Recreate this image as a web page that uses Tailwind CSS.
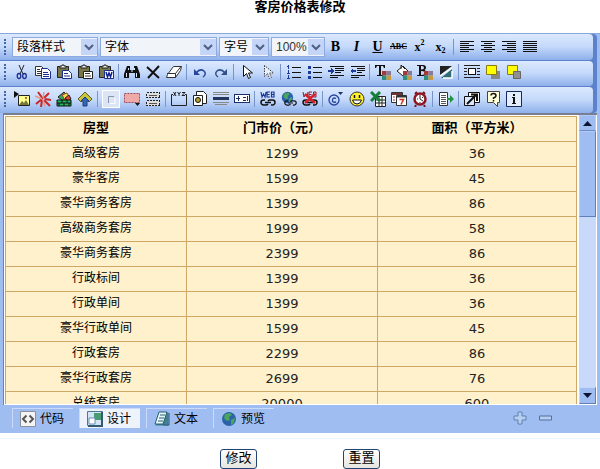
<!DOCTYPE html>
<html lang="zh-CN">
<head>
<meta charset="utf-8">
<title>客房价格表修改</title>
<script src="https://cdn.jsdelivr.net/npm/@tailwindcss/browser@4"></script>
</head>
<body class="bg-white text-black text-[12px] leading-4 overflow-hidden font-['Liberation_Sans','Noto_Sans_CJK_SC',sans-serif]">

<svg class="hidden" aria-hidden="true">
  <symbol id="chain" viewBox="0 0 16 8"><path d="M5 1.500H3.500a2.500 2.500 0 0 0 0 5H6a2.500 2.500 0 0 0 2-1M11 6.500h1.500a2.500 2.500 0 0 0 0-5H10a2.500 2.500 0 0 0-2 1M5 4h6" fill="none" stroke="#111" stroke-width="1.500"/></symbol>
  <symbol id="clip" viewBox="0 0 16 16"><path d="M1.500 2.500h11v11h-11z" fill="#77774a" stroke="#222"/><path d="M4 4V2h2V1h2v1h2v2z" fill="#eee" stroke="#222"/></symbol>
  <symbol id="swatch" viewBox="0 0 8 8"><path d="M0 0h4v4H0z" fill="#a33a35"/><path d="M4 0h4v4H4z" fill="#8a7a9a"/><path d="M0 4h4v4H0z" fill="#2f8f7f"/><path d="M4 4h4v4H4z" fill="#c89a40"/></symbol>
  <symbol id="globe" viewBox="0 0 16 16"><circle cx="8" cy="8" r="7" fill="#2b62a8"/><path d="M4 3l5-1 2 2-3 2 1 3-3 1-3-3zM10 9l4-2-1 5-3 2z" fill="#49a65c"/></symbol>
</svg>

<h1 class="h-[33px] text-center text-[13px] leading-[14px] font-bold">客房价格表修改</h1>

<main class="border-t border-[#88a8dc] bg-[#a0bdf2]">
  <div class="mr-[3px] rounded-r bg-[#5d82cc] [&_svg]:size-4 [&_button]:flex [&_button]:h-5 [&_button]:w-[21px] [&_button]:items-center [&_button]:justify-center" role="group" aria-label="编辑工具">

    <!-- 样式与字体 -->
    <div class="mr-1 flex h-[26px] items-center rounded-r bg-linear-to-b from-[#dce9fe] via-[#c3d8fa] to-[#8fb0eb]" role="toolbar" aria-label="格式">
      <span class="ml-1 mr-[6px] h-4 border-l-2 border-dotted border-[#4665a5]"></span>
      <div class="flex h-5 items-center gap-[2px] [&>label]:relative [&>label]:block [&>label]:h-5 [&>label]:border [&>label]:border-[#8caade] [&>label]:bg-[#f1f4f8] [&_select]:h-full [&_select]:w-full [&_select]:appearance-none [&_select]:pl-1 [&_svg]:pointer-events-none [&_svg]:absolute [&_svg]:right-0 [&_svg]:top-[1px] [&_svg]:bg-[#c4d5f8]">
        <label class="w-[86px]"><select aria-label="段落样式"><option>段落样式</option></select><svg viewBox="0 0 16 16"><path d="M4 6l4 4 4-4" fill="none" stroke="#4d6185" stroke-width="2"/></svg></label>
        <label class="w-[117px]"><select aria-label="字体"><option>字体</option></select><svg viewBox="0 0 16 16"><path d="M4 6l4 4 4-4" fill="none" stroke="#4d6185" stroke-width="2"/></svg></label>
        <label class="w-[50px]"><select aria-label="字号"><option>字号</option></select><svg viewBox="0 0 16 16"><path d="M4 6l4 4 4-4" fill="none" stroke="#4d6185" stroke-width="2"/></svg></label>
        <label class="w-[54px] text-[#333]"><select aria-label="缩放"><option>100%</option></select><svg viewBox="0 0 16 16"><path d="M4 6l4 4 4-4" fill="none" stroke="#4d6185" stroke-width="2"/></svg></label>
      </div>
      <div class="flex font-['Liberation_Serif',serif] text-[14px] font-bold">
        <button aria-label="加粗">B</button>
        <button aria-label="斜体" class="italic">I</button>
        <button aria-label="下划线" class="underline">U</button>
        <button aria-label="删除线" class="text-[8px] line-through">ABC</button>
        <button aria-label="上标" class="text-[12px]">x<span class="self-start text-[8px] leading-3">2</span></button>
        <button aria-label="下标" class="text-[12px]">x<span class="self-end text-[8px] leading-3">2</span></button>
      </div>
      <span class="mx-[2px] h-4 border-l border-[#7795c8]"></span>
      <div class="flex">
        <button aria-label="左对齐"><svg viewBox="0 0 16 16" shape-rendering="crispEdges"><path d="M1 2.500h14M1 4.500h9M1 6.500h14M1 8.500h9M1 10.500h14M1 12.500h9" stroke="#111"/></svg></button>
        <button aria-label="居中"><svg viewBox="0 0 16 16" shape-rendering="crispEdges"><path d="M1 2.500h14M4 4.500h8M1 6.500h14M4 8.500h8M1 10.500h14M4 12.500h8" stroke="#111"/></svg></button>
        <button aria-label="右对齐"><svg viewBox="0 0 16 16" shape-rendering="crispEdges"><path d="M1 2.500h14M6 4.500h9M1 6.500h14M6 8.500h9M1 10.500h14M6 12.500h9" stroke="#111"/></svg></button>
        <button aria-label="两端对齐"><svg viewBox="0 0 16 16" shape-rendering="crispEdges"><path d="M1 2.500h14M1 4.500h14M1 6.500h14M1 8.500h14M1 10.500h14M1 12.500h14" stroke="#111"/></svg></button>
      </div>
    </div>

    <!-- 剪贴板与编辑 -->
    <div class="mr-1 mt-px flex h-[25px] items-center rounded-r bg-linear-to-b from-[#dce9fe] via-[#c3d8fa] to-[#8fb0eb] pb-[3px]" role="toolbar" aria-label="编辑">
      <span class="ml-1 mr-[5px] h-4 border-l-2 border-dotted border-[#4665a5]"></span>
      <button aria-label="剪切"><svg viewBox="0 0 16 16"><path d="M5 1l4 9M10 1L6 10" fill="none" stroke="#222"/><ellipse cx="5" cy="12" rx="1.800" ry="2.500" fill="none" stroke="#1c2f8c" stroke-width="1.300"/><ellipse cx="10.500" cy="12" rx="1.800" ry="2.500" fill="none" stroke="#1c2f8c" stroke-width="1.300"/></svg></button>
      <button aria-label="复制"><svg viewBox="0 0 16 16"><path d="M.5 2.500h6l2 2v7h-8z" fill="#fff" stroke="#333"/><path d="M2 5.500h3M2 7.500h4M2 9.500h4" stroke="#333"/><path d="M6.500 4.500h6l3 3v7h-9z" fill="#fff" stroke="#1c2f8c"/><path d="M8 8.500h5M8 10.500h6M8 12.500h6" stroke="#1c2f8c"/></svg></button>
      <button aria-label="粘贴"><svg viewBox="0 0 16 16"><use href="#clip"/><path d="M6.500 6.500h6l3 3v5h-9z" fill="#fff" stroke="#1c2f8c"/><path d="M8 9.500h4M8 12h6" stroke="#1c2f8c"/></svg></button>
      <button aria-label="粘贴纯文本"><svg viewBox="0 0 16 16"><use href="#clip"/><path d="M6.500 7.500h9v7h-9z" fill="#fff" stroke="#222"/><path d="M8 9.500h5M8 12h6" stroke="#333"/></svg></button>
      <button aria-label="从Word粘贴"><svg viewBox="0 0 16 16"><use href="#clip"/><path d="M6.500 6.500h9v8h-9z" fill="#fff" stroke="#1c2f8c"/><path d="M8 8l1.500 5L11 9l1.500 4L14 8" fill="none" stroke="#10208c" stroke-width="1.500"/></svg></button>
      <span class="mx-[2px] h-4 border-l border-[#7795c8]"></span>
      <button aria-label="查找"><svg viewBox="0 0 16 16"><path d="M3 2h3v4h4V2h3l3 8v4h-5V9H5v5H0v-4z" fill="#111"/><path d="M2.500 9v4M12.500 9v4M4.500 4v2M10.500 4v2M7 7h2" stroke="#dce7fa"/></svg></button>
      <button aria-label="删除"><svg viewBox="0 0 16 16"><path d="M2 3l12 11M14 2L3 14" stroke="#111" stroke-width="2"/></svg></button>
      <button aria-label="清除格式"><svg viewBox="0 0 16 16"><path d="M7.500 2.500h8l-1 4-5 7h-9l1-3z" fill="#fff" stroke="#333"/><path d="M1 9.500h8.500l5.500-7M9.500 9.500v4" fill="none" stroke="#333"/></svg></button>
      <span class="mx-[2px] h-4 border-l border-[#7795c8]"></span>
      <button aria-label="撤销"><svg viewBox="0 0 16 16"><path d="M4 9q4-5 8-2 3 3-1 6" fill="none" stroke="#26459c" stroke-width="1.500"/><path d="M2 5v6h6z" fill="#26459c"/></svg></button>
      <button aria-label="重做"><svg viewBox="0 0 16 16"><path d="M12 9Q8 4 4 7q-3 3 1 6" fill="none" stroke="#33508a" stroke-width="1.500"/><path d="M14 5v6H8z" fill="#33508a"/></svg></button>
      <span class="mx-[2px] h-4 border-l border-[#7795c8]"></span>
      <button aria-label="选择"><svg viewBox="0 0 16 16"><path d="M4.500 1.500v11l3-3 2 5 2-1-2-4.500h4z" fill="#fff" stroke="#111"/></svg></button>
      <button aria-label="取消选择"><svg viewBox="0 0 16 16"><path d="M4.500 1.500v11l3-3 2 5 2-1-2-4.500h4z" fill="#e8f0fd" stroke="#444" stroke-dasharray="1.500 1"/></svg></button>
      <span class="mx-[2px] h-4 border-l border-[#7795c8]"></span>
      <button aria-label="编号列表"><svg viewBox="0 0 16 16" shape-rendering="crispEdges"><path d="M2.500 1v4M2.500 6v4M2.500 11v4M1 2.500h2M1 9.500h3M1 14.500h3" stroke="#1d3b9a"/><path d="M6 3.500h9M6 8.500h9M6 13.500h9" stroke="#111"/></svg></button>
      <button aria-label="项目列表"><svg viewBox="0 0 16 16" shape-rendering="crispEdges"><path d="M1 2h3v3H1zM1 7h3v3H1zM1 12h3v3H1z" fill="#1d3b9a"/><path d="M6 3.500h9M6 8.500h9M6 13.500h9" stroke="#111"/></svg></button>
      <button aria-label="增加缩进"><svg viewBox="0 0 16 16" shape-rendering="crispEdges"><path d="M2 2.500h14M7 4.500h9M7 6.500h9M7 8.500h6M2 11.500h14M2 13.500h8" stroke="#111"/><path d="M0 6h3V4l3 3-3 3V8H0z" fill="#1d3b9a"/></svg></button>
      <button aria-label="减少缩进"><svg viewBox="0 0 16 16" shape-rendering="crispEdges"><path d="M2 2.500h14M8 4.500h8M8 6.500h8M8 8.500h5M2 11.500h14M2 13.500h8" stroke="#111"/><path d="M7 6H4V4L1 7l3 3V8h3z" fill="#1d3b9a"/></svg></button>
      <span class="mx-[2px] h-4 border-l border-[#7795c8]"></span>
      <button aria-label="文字颜色"><svg viewBox="0 0 16 16"><path d="M0 1h10v3H9L8 2H6v9h2v1H2v-1h2V2H2L1 4H0z" fill="#111"/><use href="#swatch" x="7" y="7" width="9" height="9"/></svg></button>
      <button aria-label="填充颜色"><svg viewBox="0 0 16 16"><path d="M7 2l5 5-5 5-6-5z" fill="#fff" stroke="#222"/><path d="M5 5V1l4 4" fill="none" stroke="#222"/><use href="#swatch" x="7" y="7" width="9" height="9"/></svg></button>
      <button aria-label="文字背景色"><svg viewBox="0 0 16 16"><path fill-rule="evenodd" d="M0 1h6q3 0 3 2.700Q9 5.300 7.500 6 10 7 10 9q0 3-4 3H0v-1h2V2H0zM4 2v3.500h1q2 0 2-1.700Q7 2 5 2zM4 7v4h1q2.500 0 2.500-2T5 7z" fill="#111"/><use href="#swatch" x="7" y="7" width="9" height="9"/></svg></button>
      <button aria-label="背景色"><svg viewBox="0 0 16 16"><path d="M2 2h12L2 11z" fill="#222"/><path d="M14 5v9H3z" fill="#316b75"/><path d="M2 12L14 4M5 14h9V7" fill="none" stroke="#fff" stroke-width="1.500"/></svg></button>
      <span class="mx-[2px] h-4 border-l border-[#7795c8]"></span>
      <button aria-label="文字环绕"><svg viewBox="0 0 16 16" shape-rendering="crispEdges"><path d="M0 1.500h16M0 4.500h3M13 4.500h3M0 7.500h3M13 7.500h3M0 10.500h3M13 10.500h3M0 13.500h16" stroke="#222"/><path d="M4.500 4.500h7v6h-7z" fill="#fff" stroke="#111"/></svg></button>
      <button aria-label="上移一层"><svg viewBox="0 0 16 16"><path d="M8 7h7v8H6v-4z" fill="#888"/><path d="M1.500 1.500h10v9h-10z" fill="#ff0" stroke="#8a7a10"/></svg></button>
      <button aria-label="下移一层"><svg viewBox="0 0 16 16"><path d="M1.500 1.500h10v9h-10z" fill="#ff0" stroke="#8a7a10"/><path d="M7.500 7.500h7v7h-7z" fill="#909090" stroke="#666"/></svg></button>
    </div>

    <!-- 插入对象 -->
    <div class="mr-1 mt-px flex h-[26px] items-center rounded-r bg-linear-to-b from-[#dce9fe] via-[#c3d8fa] to-[#8fb0eb] pb-[3px]" role="toolbar" aria-label="插入">
      <span class="ml-1 mr-[5px] h-4 border-l-2 border-dotted border-[#4665a5]"></span>
      <button aria-label="插入图片"><svg viewBox="0 0 16 16"><path d="M4.500 4.500h11v10h-11z" fill="#ffff8c" stroke="#222"/><path d="M5 14l3-4 2 2 2-3 3 5z" fill="#77753a"/><circle cx="12" cy="7" r="1" fill="#a33"/><path d="M0 0l5 3-5 4z" fill="#111"/></svg></button>
      <button aria-label="插入Flash"><svg viewBox="0 0 16 16"><path d="M8 8L3 1M9 7l5-5M10 8l6 1M9 9l6 6M7 9l-1 7M7 8l-6 5" stroke="#c9272a" stroke-width="2"/><path d="M0 5l7 3M8 7l1-6M8 9l2 6" fill="none" stroke="#ec927c" stroke-width="1.500"/></svg></button>
      <button aria-label="插入媒体"><svg viewBox="0 0 16 16"><path d="M2 6l6-5 3 3-4 6z" fill="#35a858" stroke="#222"/><path d="M6 4l5-2 2 4-4 3z" fill="#f4e24c" stroke="#a33"/><path d="M9 7l4-3 2 4-3 2z" fill="#e04a36" stroke="#222"/><path d="M1 9h14v6H1z" fill="#25b45c" stroke="#111"/><path d="M6 9v3M11 9v3M3 12v3M8 12v3M13 12v3M1 12h14" stroke="#111"/></svg></button>
      <button aria-label="插入附件"><svg viewBox="0 0 16 16"><path d="M8 1l7 7-3 3-4-4-4 4-3-3z" fill="#c8c53c" stroke="#5d6020"/><path d="M8 6l4 4h-2v5H6v-5H4z" fill="#3569b8" stroke="#1d3b7a"/></svg></button>
      <span class="mx-[2px] h-4 border-l border-[#7795c8]"></span>
      <button aria-label="显示边框"><span class="border border-white bg-[#dbe5f6]"><svg viewBox="0 0 16 16"><path d="M5.500 12V5.500H11" fill="none" stroke="#8994a8"/><path d="M7 12.500h5V7" fill="none" stroke="#fff"/></svg></span></button>
      <button aria-label="表格菜单"><svg viewBox="0 0 16 16"><path d="M.5 2.500h15v9H.5z" fill="#efaaa8" stroke="#9c4a55" stroke-dasharray="2 1"/><path d="M11 12h5l-2.500 3z" fill="#111"/></svg></button>
      <button aria-label="插入分页"><svg viewBox="0 0 16 16" shape-rendering="crispEdges"><path d="M1.500 1.500h13v5h-13zM1.500 9.500h13v5h-13z" fill="#ddd" stroke="#222" stroke-dasharray="2 1"/><path d="M4 4h8M4 12h8" stroke="#555"/></svg></button>
      <span class="mx-[2px] h-4 border-l border-[#7795c8]"></span>
      <button aria-label="字段集"><svg viewBox="0 0 16 16"><path d="M2 3.500H.5v11h15v-11H14" fill="none" stroke="#222"/><path d="M2.500 1l2.500 4M5 1L2.500 5M6.500 1L8 3l1.500-2M8 3v2M11 1.500h3l-3 3h3" fill="none" stroke="#222"/></svg></button>
      <button aria-label="插入网页"><svg viewBox="0 0 16 16"><path d="M4.500.5h7l3 3v9h-10z" fill="#fff" stroke="#222"/><path d="M1.500 4.500h9v10h-9z" fill="#fff" stroke="#222"/><circle cx="6" cy="9" r="2.500" fill="#b7a52b" stroke="#111"/></svg></button>
      <button aria-label="水平线"><svg viewBox="0 0 16 16" shape-rendering="crispEdges"><path d="M0 1.500h16M0 3.500h16M0 11.500h16M2 13.500h12" stroke="#888"/><path d="M0 7.500h16" stroke="#25355c" stroke-width="3"/></svg></button>
      <button aria-label="滚动字幕"><svg viewBox="0 0 16 16" shape-rendering="crispEdges"><path d="M.5 3.500h15v8H.5z" fill="#fff" stroke="#1d2f68"/><path d="M2 7.500h4M4 5v5M9 6.500h3M9 9.500h3M13.500 5v5" stroke="#1d2f68"/></svg></button>
      <span class="mx-[2px] h-4 border-l border-[#7795c8]"></span>
      <button aria-label="超链接"><svg viewBox="0 0 16 16"><path d="M1 1l1 5 1.500-3L5 6l1-5M10 1H7v5h3M7 3.500h2.500M11.500 1v5H14V3.500h-2.500V1H14v2.500" fill="none" stroke="#1c3994" stroke-width="1.200"/><use href="#chain" x="0" y="7" width="16" height="9"/></svg></button>
      <button aria-label="超链接图"><svg viewBox="0 0 16 16"><use href="#globe" x="0" y="0" width="13" height="13"/><use href="#chain" x="3" y="8" width="13" height="8"/></svg></button>
      <button aria-label="取消超链接"><svg viewBox="0 0 16 16"><path d="M1 1l1 5 1.500-3L5 6l1-5M10 1H7v5h3M7 3.500h2.500M11.500 1v5H14V3.500h-2.500V1H14v2.500" fill="none" stroke="#8c1c34"/><use href="#chain" x="0" y="7" width="16" height="9"/><path d="M3 3l10 9M13 3L3 12" stroke="#d5232b" stroke-width="2.500"/></svg></button>
      <span class="mx-[2px] h-4 border-l border-[#7795c8]"></span>
      <button aria-label="特殊字符"><svg viewBox="0 0 16 16"><circle cx="6" cy="9" r="5" fill="none" stroke="#26459c" stroke-width="1.300"/><path d="M8 7.500q-3-1.500-3.500 1.500T8 11" fill="none" stroke="#26459c" stroke-width="1.300"/><path d="M10 1h5l-2.500 3z" fill="#1d2f68"/></svg></button>
      <button aria-label="表情"><svg viewBox="0 0 16 16"><circle cx="8" cy="8" r="7" fill="#fff22d" stroke="#333"/><path d="M5.500 4v3M10.500 4v3" stroke="#111" stroke-width="1.500"/><path d="M3.500 9h9q-1 4-4.500 4T3.500 9z" fill="#fff" stroke="#111"/></svg></button>
      <button aria-label="插入Excel表格"><svg viewBox="0 0 16 16"><path d="M5.500 5.500h10v10h-10z" fill="#fff" stroke="#222"/><path d="M5 9h10M5 12h10M9 6v9M12 6v9" stroke="#222"/><path d="M1 1l9 9M10 1L1 10" stroke="#16803a" stroke-width="3"/></svg></button>
      <button aria-label="插入日期"><svg viewBox="0 0 16 16"><path d="M.5 1.500h11v10H.5z" fill="#fff" stroke="#333"/><path d="M1 3h10" stroke="#733" stroke-width="2"/><path d="M2 6h2M2 9h2" stroke="#a33"/><path d="M5.500 4.500h10v10h-10z" fill="#fff" stroke="#333"/><path d="M6 5.500h9" stroke="#333" stroke-width="2"/><path d="M8.500 8.500h4l-2.500 5" fill="none" stroke="#c32" stroke-width="1.500"/></svg></button>
      <button aria-label="插入时间"><svg viewBox="0 0 16 16"><path d="M3 3l2-2M13 3l-2-2M4 14l-1 2M12 14l1 2" stroke="#7c1420" stroke-width="2"/><circle cx="8" cy="8" r="5.500" fill="#fff" stroke="#8f1722" stroke-width="2.500"/><path d="M8 4v4l3 2M5 8h1M8 11v1M11 6l-1 1" fill="none" stroke="#222"/></svg></button>
      <span class="mx-[2px] h-4 border-l border-[#7795c8]"></span>
      <button aria-label="引用样式"><svg viewBox="0 0 16 16"><path d="M1.500 1.500h8v13h-8z" fill="#fff" stroke="#333"/><path d="M3 4.500h5M3 6.500h5M3 8.500h5M3 10.500h5M3 12.500h5" stroke="#555"/><path d="M9 7h3V4l4 4-4 4V9H9z" fill="#239342"/></svg></button>
      <span class="mx-[2px] h-4 border-l border-[#7795c8]"></span>
      <button aria-label="全屏编辑"><svg viewBox="0 0 16 16"><path d="M4.500 1.500h11v10h-11z" fill="#fff" stroke="#111"/><path d="M.5 5.500h10v9H.5z" fill="#dce8fd" stroke="#111"/><path d="M3 13l9-9M7 3.500h6V10" fill="none" stroke="#111" stroke-width="2"/></svg></button>
      <button aria-label="帮助"><svg viewBox="0 0 16 16"><path d="M2.500.5h12v11h-2v4l-4-4h-6z" fill="#ffffd8" stroke="#444"/><path d="M6 4.500Q6 2.500 8.500 2.500T11 5q0 1-2.500 2v1M8.500 9v1.500" fill="none" stroke="#111" stroke-width="1.500"/></svg></button>
      <button aria-label="关于"><svg viewBox="0 0 16 16"><path d="M.5.5h15v15H.5z" fill="#e4edfd" stroke="#17285a"/><path d="M7 3h2v2H7zM6 6h3v6h1v1H6v-1h1V7H6z" fill="#111"/></svg></button>
    </div>
  </div>

  <!-- 编辑区 -->
  <section class="ml-[3px] mr-[3px] flex h-[292px] border-l border-t-2 border-[#777f91] bg-white pb-[1px]" aria-label="编辑区">
    <div class="min-w-0 flex-1 overflow-hidden pl-[1px] pt-[1px] pr-[2px]">
      <table class="w-full table-fixed border-collapse bg-[#fff1cc] text-center [&_td]:border [&_td]:border-[#cfa766] [&_td]:p-0 [&_td:first-child]:pb-[2px] [&_th]:border [&_th]:border-[#cfa766] [&_th]:p-0 [&_th]:pb-[2px] [&_tr]:h-[25px] [&_td+td]:font-['DejaVu_Sans',sans-serif] [&_td+td]:text-[13px] [&_td+td]:text-[#222]">
        <colgroup><col class="w-[181px]"><col class="w-[191px]"><col></colgroup>
        <thead class="text-[13px]"><tr><th scope="col">房型</th><th scope="col">门市价（元）</th><th scope="col">面积（平方米）</th></tr></thead>
        <tbody>
          <tr><td>高级客房</td><td>1299</td><td>36</td></tr>
          <tr><td>豪华客房</td><td>1599</td><td>45</td></tr>
          <tr><td>豪华商务客房</td><td>1399</td><td>86</td></tr>
          <tr><td>高级商务套房</td><td>1999</td><td>58</td></tr>
          <tr><td>豪华商务套房</td><td>2399</td><td>86</td></tr>
          <tr><td>行政标间</td><td>1399</td><td>36</td></tr>
          <tr><td>行政单间</td><td>1399</td><td>36</td></tr>
          <tr><td>豪华行政单间</td><td>1599</td><td>45</td></tr>
          <tr><td>行政套房</td><td>2299</td><td>86</td></tr>
          <tr><td>豪华行政套房</td><td>2699</td><td>76</td></tr>
          <tr><td>总统套房</td><td>20000</td><td>600</td></tr>
        </tbody>
      </table>
    </div>
    <div class="mr-[1px] flex w-[17px] flex-col bg-[#c9d9fa]">
      <button aria-label="向上滚动" class="flex h-4 items-center justify-center border border-[#b5cbf7] border-b-[#6d8cc4] bg-[#a0bdf2]"><svg class="h-[5px] w-[9px]" viewBox="0 0 9 5"><path d="M0 5l4.500-5L9 5z" fill="#0c1430"/></svg></button>
      <div class="h-[86px] border border-[#b5cbf7] border-b-[#5f7fb8] border-r-[#5f7fb8] bg-[#a0bdf2]"></div>
      <button aria-label="向下滚动" class="mt-auto flex h-[17px] items-center justify-center border border-[#c5d6fa] border-b-[#5f7fb8] border-r-[#5f7fb8] bg-[#a0bdf2]"><svg class="h-[5px] w-[9px]" viewBox="0 0 9 5"><path d="M0 0l4.500 5L9 0z" fill="#0c1430"/></svg></button>
    </div>
  </section>

  <!-- 视图切换 -->
  <nav class="flex h-7 items-center gap-[6px] pb-[2px] pl-3 pr-[46px] [&>button]:flex [&>button]:h-5 [&>button]:w-[61px] [&>button]:items-center [&>button]:gap-1 [&>button]:border-l [&>button]:border-t [&>button]:border-[#c9dafa] [&>button]:pl-[7px] [&_svg]:size-4" aria-label="视图">
    <button><svg viewBox="0 0 16 16"><path d="M.5.5h15v15H.5z" fill="#f4f4f4" stroke="#8b9099"/><path d="M6.500 4.500L3 8l3.500 3.500M9.500 4.500L13 8l-3.500 3.500" fill="none" stroke="#555" stroke-width="2"/></svg>代码</button>
    <button class="bg-[#eef2fa]"><svg viewBox="0 0 16 16"><path d="M.5.5h15v14H.5z" fill="#d4e3f5" stroke="#4e7a90"/><path d="M7 2h7v7H7z" fill="#4a9c72"/><path d="M2 7h6v6H2z" fill="#fff" stroke="#6d8eb8"/><path d="M15 1v14H1" fill="none" stroke="#335b70" stroke-width="2"/></svg>设计</button>
    <button><svg viewBox="0 0 16 16"><path d="M5.500 1.500h9v13h-13z" fill="#3e8094"/><path d="M5 1h8L9 13H1z" fill="#e6f7f9" stroke="#285d70"/><path d="M6 4h5M5 7h5M4 10h5M15 2v12H9" fill="none" stroke="#285d70"/></svg>文本</button>
    <button><svg viewBox="0 0 16 16"><use href="#globe"/></svg>预览</button>
    <a href="#" aria-label="增加高度" class="ml-auto"><svg viewBox="0 0 16 16"><path d="M6 2h4v4h4v4h-4v4H6v-4H2V6h4z" fill="#b6cff0" stroke="#6182af"/></svg></a>
    <a href="#" aria-label="减少高度" class="ml-1"><svg viewBox="0 0 16 16"><path d="M1.500 6h12v4h-12z" fill="#b6cff0" stroke="#51719f"/></svg></a>
  </nav>
</main>

<footer class="mt-[5px] flex justify-center gap-[86px] border-t border-[#edf4fb] pt-[10px]">
  <button class="h-5 w-[37px] rounded-[3px] border border-[#224474] bg-linear-to-b from-white to-[#e6e5df] pb-[2px] text-[13px] leading-4">修改</button>
  <button class="h-5 w-[37px] rounded-[3px] border border-[#224474] bg-linear-to-b from-white to-[#e6e5df] pb-[2px] text-[13px] leading-4">重置</button>
</footer>
</body>
</html>
